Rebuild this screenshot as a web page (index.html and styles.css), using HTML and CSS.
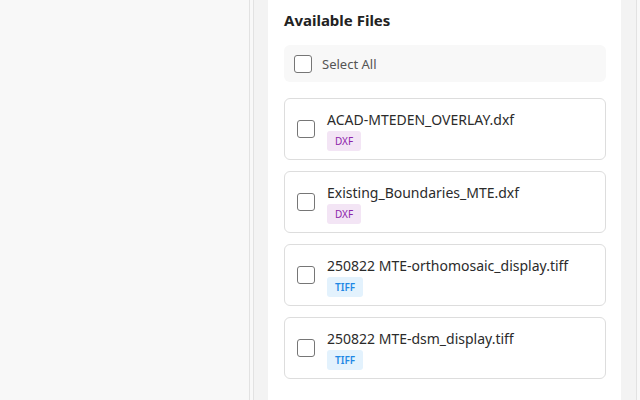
FILE: index.html
```html
<!DOCTYPE html>
<html lang="en">
<head>
  <meta charset="UTF-8" />
  <meta name="viewport" content="width=device-width, initial-scale=1.0"/>
  <title>Files</title>
  <link rel="stylesheet" href="styles.css">
</head>
<body>

  <div class="layout">
    <!-- Left pane -->
    <aside class="sidebar"></aside>

    <!-- File picker -->
    <main class="content">
      <section class="panel">
        <h2>Available Files</h2>

        <label class="select-all">
          <span class="box"></span>
          <span>Select All</span>
        </label>

        <div class="file-list">
          <label class="file-card">
            <span class="box"></span>
            <span class="file-info">
              <span class="file-name">ACAD-MTEDEN_OVERLAY.dxf</span>
              <span class="badge dxf">DXF</span>
            </span>
          </label>

          <label class="file-card">
            <span class="box"></span>
            <span class="file-info">
              <span class="file-name">Existing_Boundaries_MTE.dxf</span>
              <span class="badge dxf">DXF</span>
            </span>
          </label>

          <label class="file-card">
            <span class="box"></span>
            <span class="file-info">
              <span class="file-name">250822 MTE-orthomosaic_display.tiff</span>
              <span class="badge tiff">TIFF</span>
            </span>
          </label>

          <label class="file-card">
            <span class="box"></span>
            <span class="file-info">
              <span class="file-name">250822 MTE-dsm_display.tiff</span>
              <span class="badge tiff">TIFF</span>
            </span>
          </label>
        </div>
      </section>
    </main>
    <div class="rail"></div>
  </div>

</body>
</html>
```

FILE: styles.css
```css
body {
  margin: 0;
  font-family: 'Noto Sans', 'Open Sans', sans-serif;
  color: #333;
  background: #f8f8f8;
  overflow: hidden;
}

.layout {
  display: flex;
  height: 400px;
}

.sidebar {
  width: 249px;
  border-right: 1px solid #e2e2e2;
  background: #f8f8f8;
  flex-shrink: 0;
}

.content {
  flex: 1;
  margin-left: 3px;
  border-left: 1px solid #e2e2e2;
  background: #f3f3f3;
  padding: 0 15px 0 14px;
  overflow: hidden;
}

.rail {
  width: 3px;
  border-left: 1px solid #e2e2e2;
  background: #f8f8f8;
}

.panel {
  background: #fff;
  height: 100%;
  padding: 0 15px 0 16px;
  box-sizing: border-box;
}

h2 {
  margin: 0;
  padding: 10px 0 15px;
  font-size: 15px;
  line-height: 20px;
  font-weight: 700;
  color: #222;
}

.box {
  width: 16px;
  height: 16px;
  border: 1px solid #767676;
  border-radius: 3px;
  background: #fff;
  flex-shrink: 0;
}

.select-all {
  display: flex;
  align-items: center;
  gap: 10px;
  height: 37px;
  padding: 0 10px;
  background: #f8f8f8;
  border-radius: 6px;
  font-size: 13px;
  color: #555;
}

.file-list {
  display: flex;
  flex-direction: column;
  gap: 11px;
  margin-top: 16px;
}

.file-card {
  display: flex;
  align-items: center;
  gap: 12px;
  height: 60px;
  padding: 0 12px;
  border: 1px solid #ddd;
  border-radius: 6px;
}

.file-info {
  display: flex;
  flex-direction: column;
  align-items: flex-start;
  gap: 1px;
  margin-top: 3px;
}

.file-name {
  font-size: 14px;
  line-height: 20px;
  color: #2b2b2b;
}

.badge {
  font-size: 10px;
  line-height: 14px;
  padding: 3px 8px;
  border-radius: 3px;
}

.dxf {
  background: #f3e5f5;
  color: #8e24aa;
}

.tiff {
  background: #e3f2fd;
  color: #1e88e5;
  font-weight: 600;
}
```
